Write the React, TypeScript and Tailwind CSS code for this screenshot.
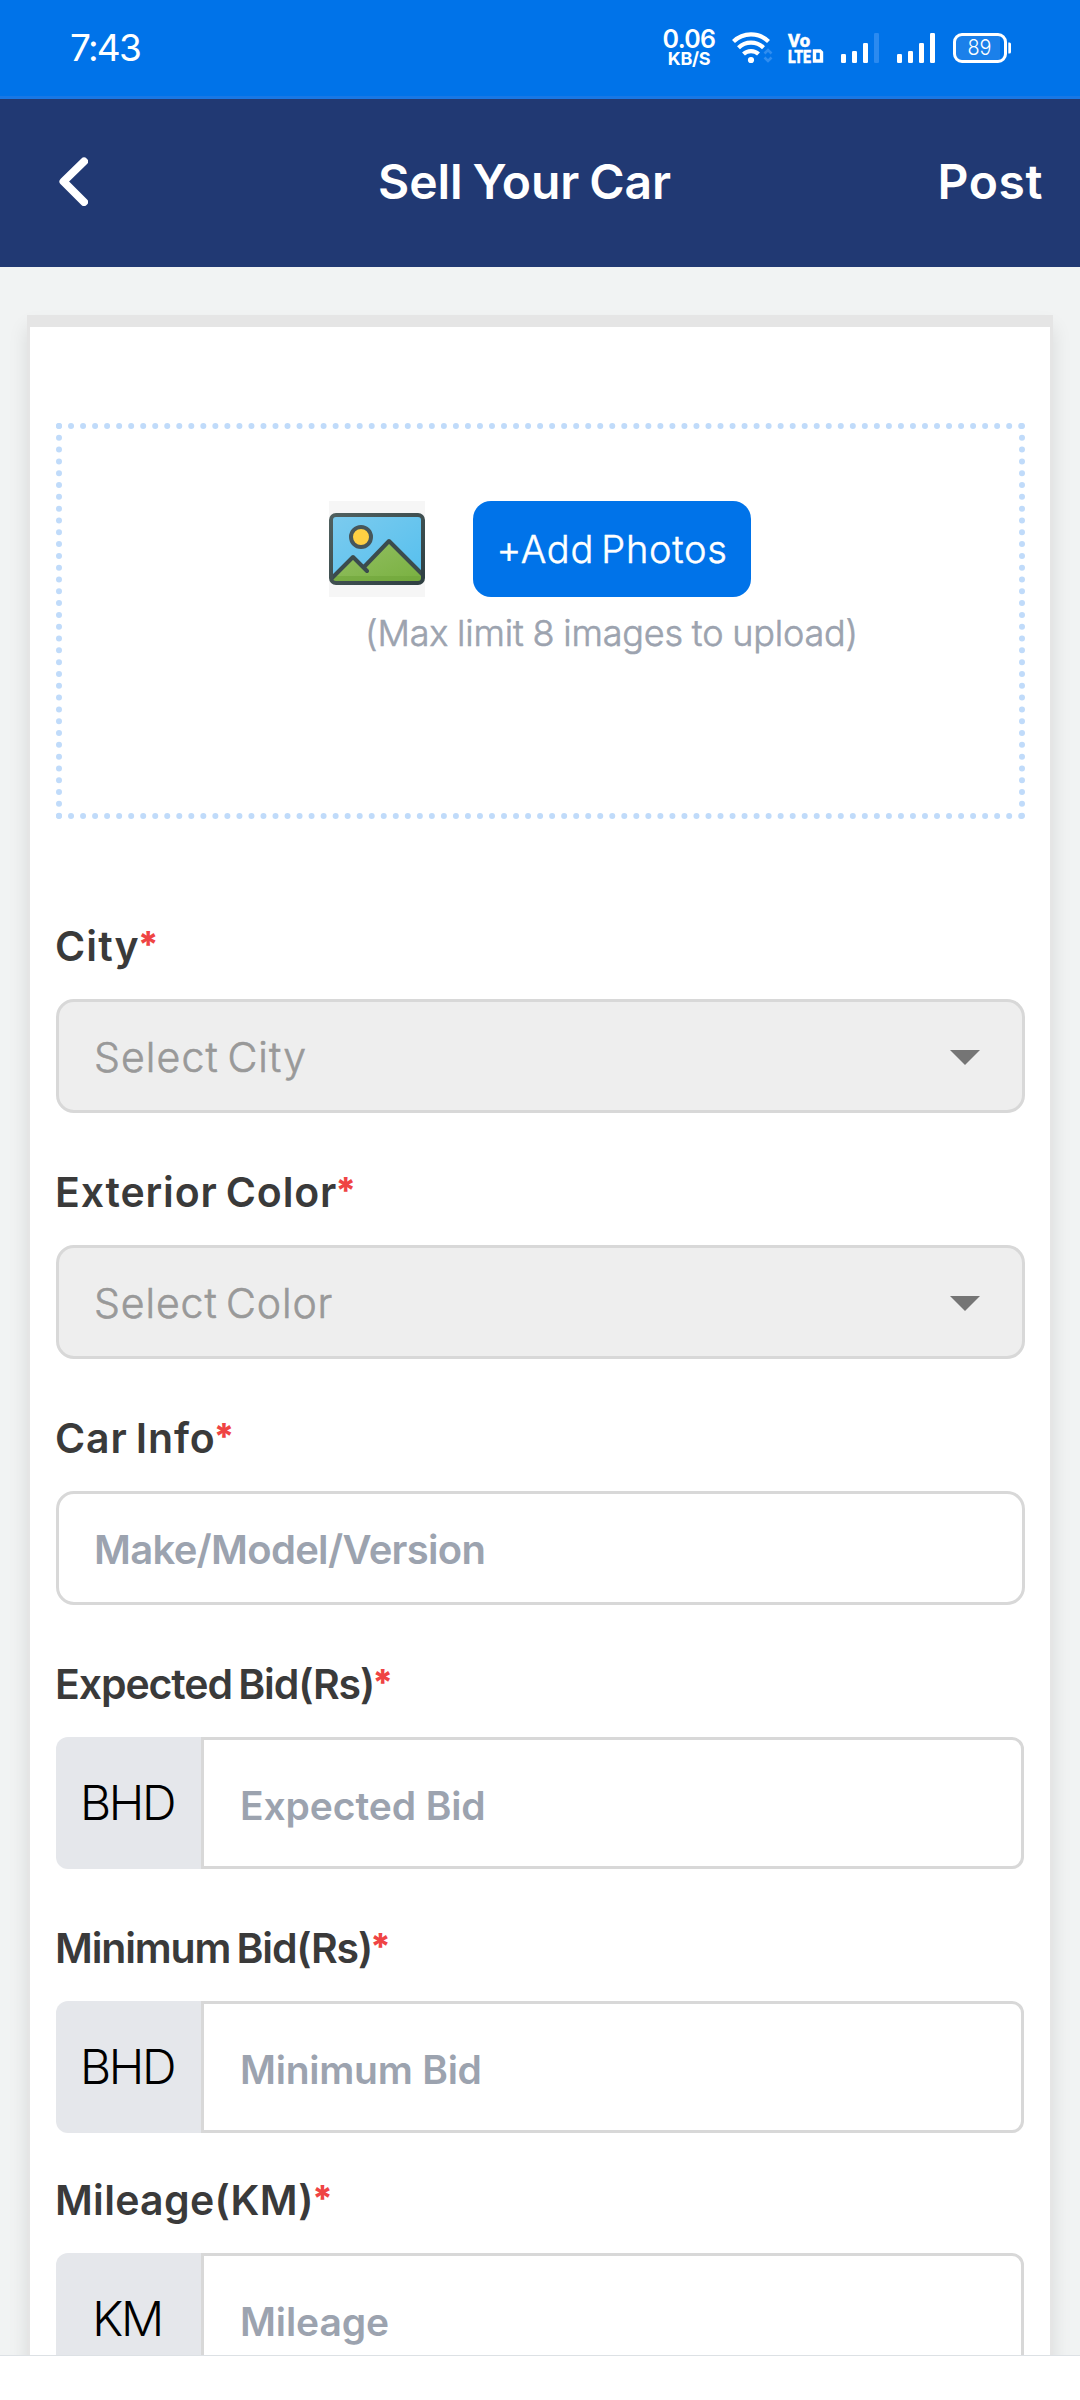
import type { ReactNode } from "react";

function StatusIcons() {
  return (
    <svg width="352" height="96" viewBox="64 0 352 96" fill="none" className="block">
      {/* Wi-Fi with activity arrows */}
      <g stroke="#fff" strokeWidth="4.2">
        <path d="M69.5 41.5a25 25 0 0 1 35 0" />
        <path d="M74.5 47.7a18 18 0 0 1 25 0" />
        <path d="M79.5 54a11 11 0 0 1 15 0" />
      </g>
      <circle cx="87" cy="60" r="3.1" fill="#fff" />
      <path d="M100.500 53.500l3.500-3.500 3.500 3.500M100.500 57.500l3.500 3.500 3.500-3.500" stroke="#2f8df0" strokeWidth="2.600" />
      {/* VoLTE */}
      <g fontFamily="Roboto" fontWeight="800" fill="#fff" stroke="#fff" strokeWidth="0.5">
        <text x="124" y="47" fontSize="18.500" textLength="22" lengthAdjust="spacingAndGlyphs">Vo</text>
        <text x="124" y="63" fontSize="18.500" textLength="23" lengthAdjust="spacingAndGlyphs">LTE</text>
      </g>
      <path d="M150.500 51h5.500l1.500 1.500v8.500h-7z" stroke="#fff" strokeWidth="3.400" />
      {/* SIM signals */}
      <g fill="#fff">
        <rect x="177" y="54" width="5" height="9" rx="1.200" />
        <rect x="188" y="51" width="5" height="12" rx="1.200" />
        <rect x="199" y="43" width="5" height="20" rx="1.200" />
        <rect x="210" y="33" width="5" height="30" rx="1.200" fill="#2b8af0" />
        <rect x="233" y="54" width="5" height="9" rx="1.200" />
        <rect x="244" y="51" width="5" height="12" rx="1.200" />
        <rect x="255" y="43" width="5" height="20" rx="1.200" />
        <rect x="266" y="33" width="5" height="30" rx="1.200" />
      </g>
      {/* Battery */}
      <path d="M296 36h40v24h-40a5 5 0 0 1-5-5V41a5 5 0 0 1 5-5z" fill="#1b80ea" />
      <rect x="290.500" y="34.500" width="51" height="27" rx="7.500" stroke="#fff" strokeWidth="3" />
      <path d="M344.300 42.500h1.200a1.500 1.500 0 0 1 1.500 1.500v8a1.500 1.500 0 0 1-1.500 1.500h-1.200z" fill="#fff" />
      <text x="303.500" y="55" fontFamily="Inter" fontWeight="300" fontSize="22" textLength="24" lengthAdjust="spacingAndGlyphs" fill="#fff">89</text>
    </svg>
  );
}

function StatusBar() {
  return (
    <div className="flex h-[99px] shrink-0 justify-between border-b-[3px] border-[#1877e5] bg-[#0073e9] text-white">
      <span className="pt-[24px] pl-[70px] text-[37px] leading-[48px] font-normal tracking-[-1.75px]">7:43</span>
      <div className="flex">
        <div className="mr-[9px] flex w-[60px] flex-col items-center pt-[27px] font-semibold">
          <span className="text-[25px] leading-[24px] tracking-[-0.7px]">0.06</span>
          <span className="text-[18px] leading-[16px] font-bold tracking-[-0.3px]">KB/S</span>
        </div>
        <StatusIcons />
      </div>
    </div>
  );
}

function Header() {
  return (
    <header className="grid h-[168px] shrink-0 grid-cols-[1fr_auto_1fr] items-center bg-[#213973] pr-[37px] pb-[3px] pl-[59px] text-[48px] leading-none font-semibold text-white">
      <svg width="29" height="49" viewBox="0 0 29 49" fill="none">
        <path d="M25 4.500L4.500 24.500L25 45" stroke="#fff" strokeWidth="8" strokeLinecap="round" strokeLinejoin="round" />
      </svg>
      <h1 className="translate-x-[-26.5px] tracking-[-0.1px] [word-spacing:-2px]">Sell Your Car</h1>
      <span className="justify-self-end tracking-[0.6px]">Post</span>
    </header>
  );
}

function PictureIcon() {
  return (
    <svg width="96" height="96" viewBox="0 0 96 96" fill="none">
      <defs>
        <linearGradient id="sky" x1="0" y1="0" x2="1" y2="1">
          <stop offset="0" stopColor="#7ccbee" />
          <stop offset="1" stopColor="#54bfee" />
        </linearGradient>
        <linearGradient id="grass" x1="0" y1="0" x2="1" y2="1">
          <stop offset="0" stopColor="#95c065" />
          <stop offset="1" stopColor="#78b03f" />
        </linearGradient>
        <linearGradient id="frame" x1="0" y1="0" x2="1" y2="1">
          <stop offset="0" stopColor="#50605f" />
          <stop offset="1" stopColor="#2f3f42" />
        </linearGradient>
      </defs>
      <rect width="96" height="96" fill="#f6f6f6" />
      <rect x="2" y="14" width="92" height="68" rx="5" fill="url(#sky)" />
      <path d="M3 77L24 56L34.500 66.500L60 40L94 74V82H3z" fill="url(#grass)" />
      <path d="M3 75h90v7H3z" fill="#6fa53a" opacity=".6" />
      <path d="M3 77L24 56L38 70M34.500 66.500L60 40L94 74" stroke="#3b4b4d" strokeWidth="4" strokeLinecap="round" strokeLinejoin="round" />
      <rect x="2" y="14" width="92" height="68" rx="5" stroke="url(#frame)" strokeWidth="4" />
      <circle cx="32" cy="36" r="10" fill="#fed043" stroke="#46565a" strokeWidth="4" />
    </svg>
  );
}

function PhotoUpload() {
  return (
    <div className="h-[396px] border-[6px] border-dotted border-[#c0dbfa] pt-[72px]">
      <div className="flex justify-center gap-[48px] pr-px">
        <PictureIcon />
        <button className="h-[96px] w-[278px] rounded-[18px] bg-[#0073e9] pt-px text-[38px] font-light tracking-[0.7px] text-white [word-spacing:-4px] [-webkit-text-stroke:0.5px]">
          +Add Photos
        </button>
      </div>
      <p className="mt-[12px] pl-[142px] text-center text-[36px] leading-[48px] font-light tracking-[-0.18px] text-[#9ca3af] [word-spacing:-1px] [-webkit-text-stroke:0.6px]">
        (Max limit 8 images to upload)
      </p>
    </div>
  );
}

function Field({ label, tracking, className = "mt-[55px]", children }: { label: string; tracking: string; className?: string; children: ReactNode }) {
  return (
    <div className={className}>
      <div className={`-ml-px mb-[29px] h-[48px] text-[41px] leading-[48px] font-semibold whitespace-nowrap text-[#3a3a3a] [word-spacing:-3px] ${tracking}`}>
        {label}
        <span className="relative -top-[4px] -ml-[2px] text-[36px] leading-none font-extrabold tracking-normal text-[#ef4444]">*</span>
      </div>
      {children}
    </div>
  );
}

function Select({ text, tracking }: { text: string; tracking: string }) {
  return (
    <div className="flex h-[114px] items-center justify-between rounded-[18px] border-[3px] border-[#d8d8d8] bg-[#eeeeee] pr-[42px] pl-[35px]">
      <span className={`pt-[2px] text-[41px] leading-[48px] font-light text-[#999999] [word-spacing:-4px] [-webkit-text-stroke:0.6px] ${tracking}`}>{text}</span>
      <svg width="30" height="15" viewBox="0 0 30 15" className="mt-[3px]">
        <path d="M0 0h30L15 15z" fill="#757575" />
      </svg>
    </div>
  );
}

function UnitInput({ unit, text, tracking }: { unit: string; text: string; tracking: string }) {
  return (
    <div className="mr-px flex h-[132px]">
      <div className="flex w-[145px] items-center justify-center rounded-l-[12px] bg-[#e5e7eb] pr-[3px] text-[48px] font-light tracking-[-2.4px] text-black">
        {unit}
      </div>
      <div className="flex flex-1 items-center rounded-r-[12px] border-[3px] border-[#d8d8d8] pt-[6px] pl-[36px]">
        <span className={`text-[39px] leading-[48px] font-semibold text-[#9ca3af] ${tracking}`}>{text}</span>
      </div>
    </div>
  );
}

export default function App() {
  return (
    <div className="flex h-[2400px] w-[1080px] flex-col overflow-hidden bg-[#f1f3f3] font-['Inter',sans-serif]">
      <StatusBar />
      <Header />
      <main className="min-h-0 flex-1 overflow-hidden pt-[48px] pr-[27px] pl-[27px]">
        <div className="h-[2200px] border-x-[3px] border-t-[12px] border-[#e5e5e5] bg-white pt-[96px] pr-[25px] pl-[26px] shadow-[0_12px_18px_rgba(0,0,0,0.1)]">
          <PhotoUpload />
          <Field label="City" tracking="tracking-[1.1px]" className="mt-[103px]">
            <Select text="Select City" tracking="tracking-[1.1px]" />
          </Field>
          <Field label="Exterior Color" tracking="tracking-[0.85px]">
            <Select text="Select Color" tracking="tracking-[0.9px]" />
          </Field>
          <Field label="Car Info" tracking="tracking-[0.85px]">
            <div className="flex h-[114px] items-center rounded-[18px] border-[3px] border-[#d8d8d8] pt-[3px] pl-[35px]">
              <span className="text-[40px] leading-[48px] font-semibold tracking-[-0.7px] text-[#9ca3af]">Make/Model/Version</span>
            </div>
          </Field>
          <Field label="Expected Bid(Rs)" tracking="tracking-[-1.1px]">
            <UnitInput unit="BHD" text="Expected Bid" tracking="tracking-[-0.1px]" />
          </Field>
          <Field label="Minimum Bid(Rs)" tracking="tracking-[-1.15px]">
            <UnitInput unit="BHD" text="Minimum Bid" tracking="tracking-[-0.25px]" />
          </Field>
          <Field label="Mileage(KM)" tracking="tracking-[0.3px]" className="mt-[43px]">
            <UnitInput unit="KM" text="Mileage" tracking="tracking-[-0.1px]" />
          </Field>
        </div>
      </main>
      <div className="h-[45px] shrink-0 border-t border-[#dde1e5] bg-white" />
    </div>
  );
}
